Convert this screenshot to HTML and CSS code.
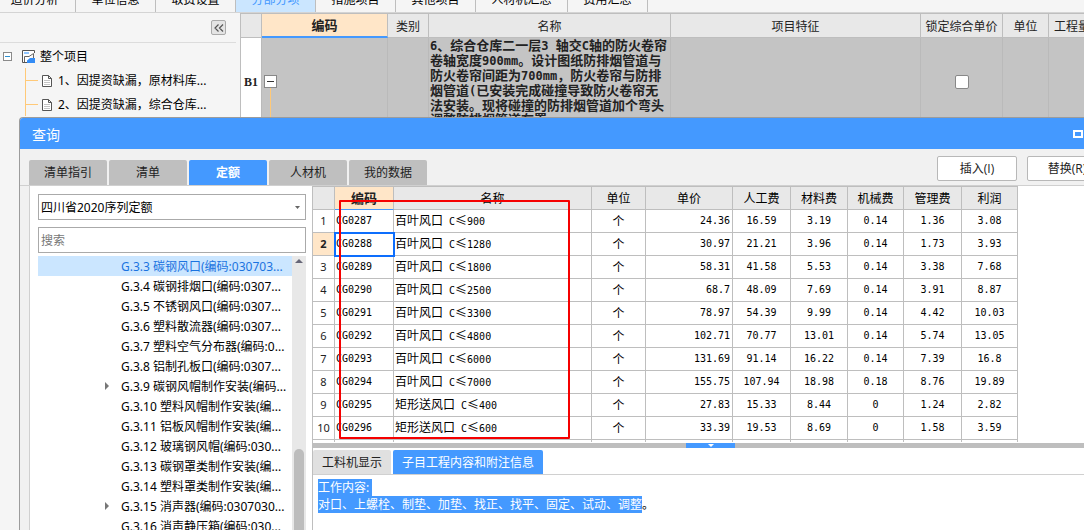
FILE: index.html
```html
<!DOCTYPE html>
<html lang="zh-CN">
<head>
<meta charset="utf-8">
<title>查询</title>
<link rel="stylesheet" href="styles.css">
</head>
<body>
<div class="app">
  <nav class="module-tabs">
    <button class="module-tab first">造价分析</button>
    <button class="module-tab">单位信息</button>
    <button class="module-tab">取费设置</button>
    <button class="module-tab active">分部分项</button>
    <button class="module-tab">措施项目</button>
    <button class="module-tab">其他项目</button>
    <button class="module-tab wide">人材机汇总</button>
    <button class="module-tab">费用汇总</button>
  </nav>
  <div class="workspace">
    <aside class="project-panel">
      <div class="project-head">
        <button class="collapse" aria-label="收起">
          <svg width="10" height="8" viewBox="0 0 10 8"><path d="M4.500 .5 1 4l3.500 3.500M9 .5 5.500 4 9 7.500" fill="none" stroke="#555" stroke-width="1.200"/></svg>
        </button>
      </div>
      <div class="project-root">
        <svg width="9" height="9" viewBox="0 0 9 9"><rect x=".5" y=".5" width="8" height="8" fill="#fff" stroke="#8a8a8a"/><path d="M2 4.500h5" stroke="#2d8fd0"/></svg>
        <svg width="13" height="13" viewBox="0 0 13 13"><path d="M12.500 3V.5H.5v12H5" fill="#fff" stroke="#555"/><path d="M2 3h5" stroke="#8ec5ff" stroke-width="2"/><path d="M2.500 12V6.500H7L11.500 3.500V8" fill="none" stroke="#666"/><path d="M5 10.500 8 8h5v5H5z" fill="#338cf5"/></svg>
        <span>整个项目</span>
      </div>
      <ul class="project-list">
        <li><svg width="10" height="12" viewBox="0 0 10 12"><path d="M.5.5h6l3 3v8h-9zM6.500.5v3h3" fill="#fff" stroke="#555"/><path d="M2 5.500h6M2 7.500h6M2 9.500h6" stroke="#c4c4c4"/></svg>1、因提资缺漏，原材料库...</li>
        <li><svg width="10" height="12" viewBox="0 0 10 12"><path d="M.5.5h6l3 3v8h-9zM6.500.5v3h3" fill="#fff" stroke="#555"/><path d="M2 5.500h6M2 7.500h6M2 9.500h6" stroke="#c4c4c4"/></svg>2、因提资缺漏，综合仓库...</li>
      </ul>
    </aside>
    <main class="bill">
      <table class="bill-table">
        <colgroup><col class="b-no"><col class="b-code"><col class="b-kind"><col class="b-name"><col><col class="b-lock"><col class="b-unit"><col class="b-qty"></colgroup>
        <thead><tr><th></th><th class="current">编码</th><th>类别</th><th>名称</th><th>项目特征</th><th>锁定综合单价</th><th>单位</th><th>工程量</th></tr></thead>
        <tbody><tr>
          <td class="row-no">B1</td>
          <td class="fold"><div class="fold-rail"><button class="fold-box" aria-label="折叠"></button></div></td>
          <td></td>
          <td class="desc"><b>6</b>、综合仓库二一层<b>3 </b>轴交<b>C</b>轴的防火卷帘<br>卷轴宽度<b>900mm</b>。设计图纸防排烟管道与<br>防火卷帘间距为<b>700mm</b>，防火卷帘与防排<br>烟管道<b>(</b>已安装完成碰撞导致防火卷帘无<br>法安装。现将碰撞的防排烟管道加个弯头<br>调整防排烟管道布置</td>
          <td></td>
          <td class="center"><input class="lock" type="checkbox" aria-label="锁定综合单价"></td>
          <td></td><td></td>
        </tr></tbody>
      </table>
    </main>
  </div>
</div>

<section class="dialog" role="dialog" aria-labelledby="dialog-title">
  <header class="titlebar">
    <h1 id="dialog-title">查询</h1>
    <button class="maximize" aria-label="最大化"></button>
  </header>
  <div class="toolbar">
    <div class="tabs">
      <button class="tab">清单指引</button>
      <button class="tab">清单</button>
      <button class="tab active">定额</button>
      <button class="tab">人材机</button>
      <button class="tab">我的数据</button>
    </div>
    <div class="actions">
      <button class="action">插入(I)</button>
      <button class="action">替换(R)</button>
    </div>
  </div>
  <div class="content">
    <aside class="catalog">
      <div class="select-wrap">
        <select aria-label="定额库"><option>四川省2020序列定额</option></select>
        <svg class="caret" width="5" height="3" viewBox="0 0 5 3"><path d="M0 0h5L2.500 3z" fill="#666"/></svg>
      </div>
      <input class="search" type="text" placeholder="搜索" aria-label="搜索">
      <div class="tree-box">
        <ul class="tree">
          <li class="selected">G.3.3 碳钢风口(编码:030703...</li>
          <li>G.3.4 碳钢排烟口(编码:0307...</li>
          <li>G.3.5 不锈钢风口(编码:0307...</li>
          <li>G.3.6 塑料散流器(编码:0307...</li>
          <li>G.3.7 塑料空气分布器(编码:0...</li>
          <li>G.3.8 铝制孔板口(编码:0307...</li>
          <li class="parent">G.3.9 碳钢风帽制作安装(编码...</li>
          <li>G.3.10 塑料风帽制作安装(编...</li>
          <li>G.3.11 铝板风帽制作安装(编...</li>
          <li>G.3.12 玻璃钢风帽(编码:030...</li>
          <li>G.3.13 碳钢罩类制作安装(编...</li>
          <li>G.3.14 塑料罩类制作安装(编...</li>
          <li class="parent">G.3.15 消声器(编码:0307030...</li>
          <li>G.3.16 消声静压箱(编码:030...</li>
        </ul>
        <div class="scrollbar"><span class="scroll-up"></span><span class="scroll-thumb"></span></div>
      </div>
    </aside>
    <div class="results">
      <div class="quota-box">
        <table class="quota">
          <colgroup><col class="q-no"><col class="q-code"><col class="q-name"><col class="q-unit"><col class="q-price"><col class="q-labor"><col class="q-mat"><col class="q-mach"><col class="q-mgmt"><col class="q-profit"></colgroup>
          <thead><tr><th></th><th class="current">编码</th><th>名称</th><th>单位</th><th>单价</th><th>人工费</th><th>材料费</th><th>机械费</th><th>管理费</th><th>利润</th></tr></thead>
          <tbody>
            <tr><th>1</th><td>CG0287</td><td>百叶风口<b> C</b>≤<b>900</b></td><td>个</td><td>24.36</td><td>16.59</td><td>3.19</td><td>0.14</td><td>1.36</td><td>3.08</td></tr>
            <tr class="chosen"><th>2</th><td>CG0288</td><td>百叶风口<b> C</b>≤<b>1280</b></td><td>个</td><td>30.97</td><td>21.21</td><td>3.96</td><td>0.14</td><td>1.73</td><td>3.93</td></tr>
            <tr><th>3</th><td>CG0289</td><td>百叶风口<b> C</b>≤<b>1800</b></td><td>个</td><td>58.31</td><td>41.58</td><td>5.53</td><td>0.14</td><td>3.38</td><td>7.68</td></tr>
            <tr><th>4</th><td>CG0290</td><td>百叶风口<b> C</b>≤<b>2500</b></td><td>个</td><td>68.7</td><td>48.09</td><td>7.69</td><td>0.14</td><td>3.91</td><td>8.87</td></tr>
            <tr><th>5</th><td>CG0291</td><td>百叶风口<b> C</b>≤<b>3300</b></td><td>个</td><td>78.97</td><td>54.39</td><td>9.99</td><td>0.14</td><td>4.42</td><td>10.03</td></tr>
            <tr><th>6</th><td>CG0292</td><td>百叶风口<b> C</b>≤<b>4800</b></td><td>个</td><td>102.71</td><td>70.77</td><td>13.01</td><td>0.14</td><td>5.74</td><td>13.05</td></tr>
            <tr><th>7</th><td>CG0293</td><td>百叶风口<b> C</b>≤<b>6000</b></td><td>个</td><td>131.69</td><td>91.14</td><td>16.22</td><td>0.14</td><td>7.39</td><td>16.8</td></tr>
            <tr><th>8</th><td>CG0294</td><td>百叶风口<b> C</b>≤<b>7000</b></td><td>个</td><td>155.75</td><td>107.94</td><td>18.98</td><td>0.18</td><td>8.76</td><td>19.89</td></tr>
            <tr><th>9</th><td>CG0295</td><td>矩形送风口<b> C</b>≤<b>400</b></td><td>个</td><td>27.83</td><td>15.33</td><td>8.44</td><td>0</td><td>1.24</td><td>2.82</td></tr>
            <tr><th>10</th><td>CG0296</td><td>矩形送风口<b> C</b>≤<b>600</b></td><td>个</td><td>33.39</td><td>19.53</td><td>8.69</td><td>0</td><td>1.58</td><td>3.59</td></tr>
            <tr><th></th><td></td><td></td><td></td><td></td><td></td><td></td><td></td><td></td><td></td></tr>
          </tbody>
        </table>
      </div>
      <div class="mark"></div>
      <div class="splitter"><button class="splitter-handle" aria-label="收起下方面板"></button></div>
      <div class="detail-tabs">
        <button class="detail-tab">工料机显示</button>
        <button class="detail-tab active">子目工程内容和附注信息</button>
      </div>
      <div class="detail">
        <p><mark>工作内容:&nbsp;</mark></p>
        <p><mark>对口、上螺栓、制垫、加垫、找正、找平、固定、试动、调整</mark>。</p>
      </div>
    </div>
  </div>
</section>
</body>
</html>
```

FILE: styles.css
```css
:root {
  --blue: #4499ff;
  --peach: #ffe6c8;
  --line: #bebebe;
  --head: #e8e8e8;
  --pick: #cbe6ff;
  --ui: "Noto Sans", "Noto Sans CJK SC", sans-serif;
  --cjk: "Noto Sans CJK SC", sans-serif;
  --mono: "DejaVu Sans Mono", "Noto Sans CJK SC", monospace;
}
* { box-sizing: border-box; }
body {
  margin: 0;
  height: 100vh;
  overflow: hidden;
  position: relative;
  background: #f5f5f5;
  color: #000;
  font: 12px/16px var(--ui);
}
button, input, select { font: inherit; color: inherit; margin: 0; padding: 0; border: 0; border-radius: 0; }
ul { list-style: none; margin: 0; padding: 0; }
p { margin: 0; }
table { border-collapse: separate; border-spacing: 0; table-layout: fixed; }

.app { height: 100%; display: flex; flex-direction: column; }
.module-tabs {
  height: 13px;
  flex: none;
  display: flex;
  align-items: flex-end;
  overflow: hidden;
  border-bottom: 1px solid #d4d4d4;
}
.module-tab {
  width: 80px;
  height: 24px;
  flex: none;
  background: #f5f5f5;
  border-right: 1px solid var(--line);
}
.module-tab.first { width: 76px; padding-right: 6px; }
.module-tab.wide { width: 92px; }
.module-tab.active { background: var(--pick); color: var(--blue); }

.workspace { flex: 1; display: flex; min-height: 0; }
.project-panel { width: 240px; flex: none; }
.project-head {
  height: 30px;
  margin-right: 4px;
  padding: 7px 10px 0 0;
  display: flex;
  justify-content: flex-end;
  border-bottom: 1px solid #dcdcdc;
}
.collapse {
  width: 15px;
  height: 15px;
  display: flex;
  align-items: center;
  justify-content: center;
  background: #e4e4e4;
  border: 1px solid #aaa;
  border-radius: 2px;
}
.project-root { height: 24px; margin-top: 1px; padding-left: 3px; display: flex; align-items: center; }
.project-root svg + svg { margin: 0 5px 0 10px; }
.project-root span { padding-top: 1px; }
.project-list { margin-left: 25px; border-left: 1px solid #ffc978; }
.project-list li { height: 24px; padding-top: 1px; display: flex; align-items: center; white-space: nowrap; }
.project-list li::before { content: ""; width: 12px; height: 1px; margin-right: 4px; background: #ffc978; }
.project-list svg { margin-right: 6px; }

.bill { flex: 1; min-width: 0; margin-right: -30px; border-left: 1px solid var(--line); background: #fff; }
.bill-table { width: 100%; }
.b-no { width: 21px; }
.b-code { width: 126px; }
.b-kind { width: 41px; }
.b-name { width: 242px; }
.b-lock { width: 82px; }
.b-unit { width: 46px; }
.b-qty { width: 65px; }
.bill-table th {
  height: 25px;
  padding: 0;
  background: var(--head);
  border: 1px solid var(--line);
  border-width: 1px 1px 1px 0;
  font: 12px/16px var(--cjk);
  color: #222;
  white-space: nowrap;
}
.bill-table th:last-child { padding-left: 5px; text-align: left; }
.bill-table th.current { background: var(--peach); border-bottom: 2px solid var(--blue); font-size: 13px; font-weight: 700; }
.bill-table td { height: 88px; padding: 0 2px; background: #c4c4c4; border-right: 1px solid #bababa; }
.bill-table td.row-no { padding: 0; background: #fff; text-align: center; font: bold 12px/16px "Liberation Serif", serif; color: #222; }
.bill-table td.desc { padding-left: 1px; font: bold 13px/14px var(--cjk); color: #222; white-space: nowrap; }
.desc b { font: bold 12px/14px var(--mono); }
.bill-table td.center { text-align: center; }
.fold-rail { height: 88px; padding-top: 37px; background: linear-gradient(#ffc978, #ffc978) 6px 50px / 1px 38px no-repeat; }
.fold-box {
  display: block;
  width: 13px;
  height: 13px;
  background: linear-gradient(#333, #333) center / 7px 1px no-repeat #fff;
  border: 1px solid #888;
}
.lock {
  appearance: none;
  display: block;
  width: 14px;
  height: 14px;
  margin: 0 auto;
  background: #fff;
  border: 1px solid #888;
  border-radius: 2px;
}

.dialog {
  position: absolute;
  top: 117px;
  left: 19px;
  right: -25px;
  bottom: 0;
  display: flex;
  flex-direction: column;
  overflow: hidden;
  background: #f1f1f1;
  border: 1px solid #9c9c9c;
  border-width: 1px 0 0 1px;
  border-radius: 4px 0 0 0;
}
.titlebar {
  height: 31px;
  flex: none;
  padding: 0 26px 0 12px;
  display: flex;
  align-items: center;
  justify-content: space-between;
  background: var(--blue);
  color: #fff;
}
.titlebar h1 { margin: 0; font: 14px/20px var(--cjk); }
.maximize { width: 10px; height: 8px; background: none; border: 2px solid #fff; }
.toolbar { height: 37px; flex: none; padding-left: 9px; display: flex; justify-content: space-between; align-items: flex-end; border-bottom: 1px solid #d0d0d0; }
.tabs { display: flex; gap: 2px; }
.tab { width: 78px; height: 25px; background: #bfbfbf; border-radius: 2px 2px 0 0; color: #222; }
.tab.active { background: var(--blue); color: #fff; font-weight: 700; }
.actions { display: flex; gap: 10px; padding: 0 2px 4px 0; }
.action { width: 80px; height: 25px; background: #fff; border: 1px solid #b8b8b8; border-radius: 2px; color: #222; font-family: "Open Sans", "Noto Sans CJK SC", sans-serif; }

.content { flex: 1; min-height: 0; display: flex; margin-left: 9px; background: #fff; border-left: 1px solid #d0d0d0; }
.catalog { width: 282px; flex: none; padding: 8px 6px 0 8px; display: flex; flex-direction: column; }
.select-wrap { position: relative; flex: none; margin-bottom: 7px; }
.select-wrap select {
  display: block;
  appearance: none;
  width: 100%;
  height: 26px;
  padding: 1px 0 0 2px;
  background: #fff;
  border: 1px solid #aaa;
}
.caret { position: absolute; right: 6px; top: 12px; pointer-events: none; }
.search { width: 100%; height: 26px; flex: none; padding: 1px 2px 0; background: #fff; border: 1px solid #aaa; }
.search::placeholder { color: #777; opacity: 1; }
.tree-box { flex: 1; min-height: 0; margin-top: 3px; display: flex; overflow: hidden; }
.tree { flex: 1; min-width: 0; }
.tree li { position: relative; height: 20px; padding: 1px 0 0 83px; line-height: 20px; white-space: nowrap; }
.tree li.selected { background: var(--pick); color: #1a73e0; }
.tree li.parent::before {
  content: "";
  position: absolute;
  left: 67px;
  top: 6px;
  border: 4px solid transparent;
  border-left-color: #777;
  border-right-width: 0;
}
.scrollbar { width: 14px; flex: none; padding: 3px 2px 0; display: flex; flex-direction: column; background: #e8e8e8; }
.scroll-up { align-self: center; border: 4px solid transparent; border-top-width: 0; border-bottom-color: #666677; }
.scroll-thumb { flex: 1; margin-top: 186px; border-radius: 5px 5px 0 0; background: #bdbdbd; }

.results { position: relative; flex: 1; min-width: 0; display: flex; flex-direction: column; border-left: 1px solid var(--line); }
.quota-box { height: 256px; flex: none; overflow: hidden; margin-bottom: 1px; }
.quota { width: 705px; }
.q-no { width: 22px; }
.q-code { width: 59px; }
.q-name { width: 198px; }
.q-unit { width: 54px; }
.q-price { width: 87px; }
.q-labor { width: 58px; }
.q-mat { width: 57px; }
.q-mach { width: 56px; }
.q-mgmt { width: 58px; }
.q-profit { width: 56px; }
.quota th, .quota td { height: 23px; padding: 0; border: 1px solid var(--line); border-width: 0 1px 1px 0; white-space: nowrap; line-height: 16px; text-align: center; }
.quota thead th { height: 24px; background: var(--head); border-top-width: 1px; font: 12px/16px var(--cjk); }
.quota thead th.current { background: var(--peach); border-bottom-color: var(--blue); font-size: 13px; font-weight: 700; color: #222; }
.quota tbody th { font: 11px/16px var(--ui); color: #222; }
.quota td { font-family: var(--mono); font-size: 10px; }
.quota td:nth-child(2) { padding-left: 1px; text-align: left; }
.quota td:nth-child(3) { padding-left: 1px; text-align: left; font: 12px/16px var(--cjk); }
.quota td:nth-child(4) { font: 12px/16px var(--cjk); }
.quota td:nth-child(5) { padding-right: 2px; text-align: right; }
.quota b { font: 10px/16px var(--mono); white-space: pre; }
.quota .chosen th { background: var(--peach); font-weight: 700; }
.quota .chosen td:nth-child(2) { outline: 2px solid #0d6efd; outline-offset: -1px; }
.mark { position: absolute; left: 26px; top: 14px; width: 231px; height: 239px; border: 2px solid #f50000; border-radius: 1px; pointer-events: none; }

.splitter { height: 5px; flex: none; padding-left: 373px; display: flex; background: var(--line); }
.splitter-handle { width: 49px; display: flex; align-items: center; justify-content: center; background: var(--blue); }
.splitter-handle::before { content: ""; border: 3px solid transparent; border-top-color: #fff; border-bottom-width: 0; }
.detail-tabs { flex: none; display: flex; gap: 2px; padding-top: 2px; border-bottom: 1px solid #d0d0d0; }
.detail-tab { height: 24px; padding: 1px 9px 0; background: #e0e0e0; border-radius: 2px 2px 0 0; color: #222; }
.detail-tab.active { background: var(--blue); color: #fff; }
.detail { padding: 4px 5px; line-height: 17px; }
.detail p { display: flex; white-space: nowrap; }
.detail mark { background: var(--blue); color: #fff; }
```
